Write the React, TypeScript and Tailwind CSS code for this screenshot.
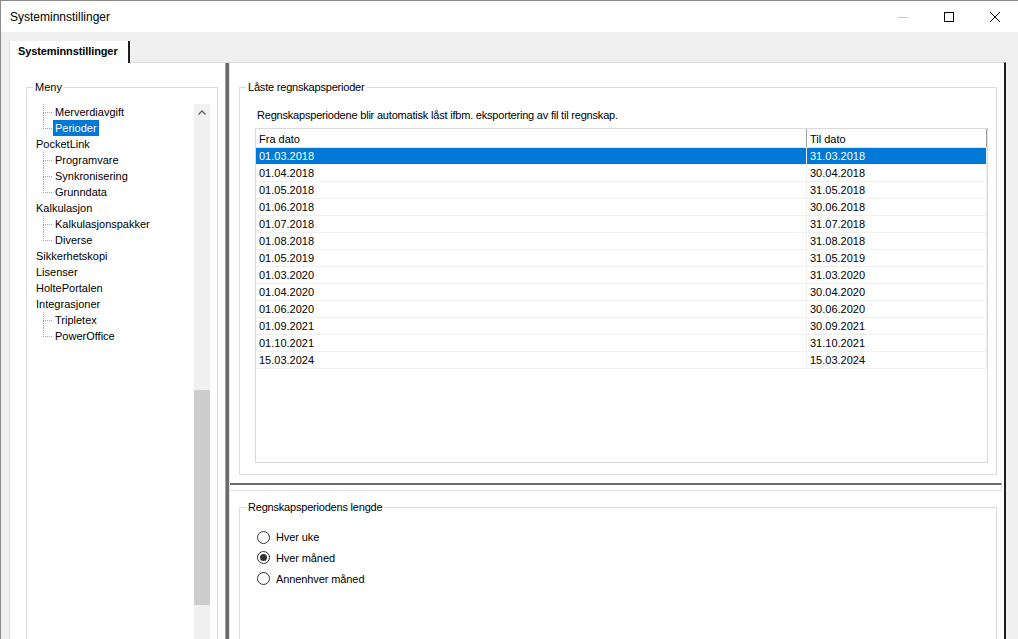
import React from "react";

type TreeItem = { label: string; level: 0 | 1; last?: boolean; selected?: boolean };

const tree: TreeItem[] = [
  { label: "Merverdiavgift", level: 1 },
  { label: "Perioder", level: 1, last: true, selected: true },
  { label: "PocketLink", level: 0 },
  { label: "Programvare", level: 1 },
  { label: "Synkronisering", level: 1 },
  { label: "Grunndata", level: 1, last: true },
  { label: "Kalkulasjon", level: 0 },
  { label: "Kalkulasjonspakker", level: 1 },
  { label: "Diverse", level: 1, last: true },
  { label: "Sikkerhetskopi", level: 0 },
  { label: "Lisenser", level: 0 },
  { label: "HoltePortalen", level: 0 },
  { label: "Integrasjoner", level: 0 },
  { label: "Tripletex", level: 1 },
  { label: "PowerOffice", level: 1, last: true },
];

const rows: [string, string][] = [
  ["01.03.2018", "31.03.2018"],
  ["01.04.2018", "30.04.2018"],
  ["01.05.2018", "31.05.2018"],
  ["01.06.2018", "30.06.2018"],
  ["01.07.2018", "31.07.2018"],
  ["01.08.2018", "31.08.2018"],
  ["01.05.2019", "31.05.2019"],
  ["01.03.2020", "31.03.2020"],
  ["01.04.2020", "30.04.2020"],
  ["01.06.2020", "30.06.2020"],
  ["01.09.2021", "30.09.2021"],
  ["01.10.2021", "31.10.2021"],
  ["15.03.2024", "15.03.2024"],
];

function TreeRow({ item }: { item: TreeItem }) {
  const text = (
    <span
      className={
        "h-[16px] px-[2px] leading-[16px] whitespace-nowrap " +
        (item.selected ? "bg-[#0078d7] text-white" : "")
      }
    >
      {item.label}
    </span>
  );
  if (item.level === 0) {
    return <div className="flex h-[16px] pl-[7px]">{text}</div>;
  }
  return (
    <div className="flex h-[16px] pl-[16px]">
      <div className="flex w-[9px] flex-col">
        <div className="h-[9px] border-b border-l border-dotted border-[#a0a0a0]" />
        <div
          className={
            "flex-1 " + (item.last ? "" : "border-l border-dotted border-[#a0a0a0]")
          }
        />
      </div>
      <div className="ml-[1px] flex">{text}</div>
    </div>
  );
}

function Radio({ label, checked }: { label: string; checked?: boolean }) {
  return (
    <div className="flex items-center pl-[17px]">
      <div className="flex h-[13px] w-[13px] items-center justify-center rounded-full border border-[#333333] bg-white">
        {checked && <div className="h-[7px] w-[7px] rounded-full bg-[#333333]" />}
      </div>
      <span className="ml-[6px] tracking-[-0.1px]">{label}</span>
    </div>
  );
}

export default function App() {
  return (
    <div className="flex h-[639px] w-[1018px] flex-col overflow-hidden border-l border-t border-[#8c8c8c] bg-[#f0f0f0] font-['Liberation_Sans',Arial,sans-serif] text-[11px] leading-[14px] text-black">
      {/* Title bar */}
      <div className="flex h-[31px] shrink-0 items-center bg-white">
        <span className="pl-[9px] text-[12px] leading-[16px]">Systeminnstillinger</span>
        <div className="ml-auto flex h-full">
          <div className="flex h-full w-[46px] items-center justify-center">
            <svg width="10" height="10" viewBox="0 0 10 10">
              <line x1="0" y1="5.5" x2="10" y2="5.5" stroke="#c8c8c8" strokeWidth="1" />
            </svg>
          </div>
          <div className="flex h-full w-[46px] items-center justify-center">
            <svg width="10" height="10" viewBox="0 0 10 10">
              <rect x="0.5" y="0.5" width="9" height="9" fill="none" stroke="#000" strokeWidth="1" />
            </svg>
          </div>
          <div className="flex h-full w-[46px] items-center justify-center">
            <svg width="10" height="10" viewBox="0 0 10 10">
              <path d="M0 0 L10 10 M10 0 L0 10" stroke="#000" strokeWidth="1" />
            </svg>
          </div>
        </div>
      </div>

      {/* Tab strip */}
      <div className="flex h-[30px] shrink-0 items-end pl-[8px]">
        <div className="relative z-10 -mb-px flex h-[22px] w-[121px] items-start border-l border-[#dcdcdc] border-r-2 border-r-[#1e1e1e] bg-white pl-[8px] pt-[3px] font-bold tracking-[-0.1px]">
          Systeminnstillinger
        </div>
      </div>

      {/* Tab page */}
      <div className="ml-[8px] mr-[12px] flex min-h-0 flex-1 border-l border-t border-[#dcdcdc] border-r-2 border-r-[#1e1e1e] bg-white">
        {/* Left panel */}
        <div className="w-[215px] shrink-0 pl-[16px] pr-[7px] pt-[17px]">
          <fieldset className="m-0 h-[600px] border border-[#dcdcdc] p-0">
            <legend className="ml-[6px] px-[2px] leading-[14px]">Meny</legend>
            <div className="mr-[7px] mt-[10px] flex h-[560px]">
              <div className="flex-1">
                {tree.map((t) => (
                  <TreeRow key={t.label} item={t} />
                ))}
              </div>
              <div className="flex w-[16px] flex-col bg-[#f0f0f0]">
                <div className="flex h-[17px] items-center justify-center">
                  <svg width="8" height="5" viewBox="0 0 8 5">
                    <path d="M0.5 4.5 L4 1 L7.5 4.5" fill="none" stroke="#606060" strokeWidth="1.3" />
                  </svg>
                </div>
                <div className="h-[269px]" />
                <div className="h-[215px] bg-[#cdcdcd]" />
              </div>
            </div>
          </fieldset>
        </div>

        {/* Vertical splitter */}
        <div className="w-[4px] shrink-0 border-l border-[#a0a0a0] bg-[#6b6b6b]" />

        {/* Right panel */}
        <div className="flex min-w-0 flex-1 flex-col border-l border-[#e3e3e3]">
          <div className="h-[420px] shrink-0 pl-[9px] pr-[7px] pt-[17px]">
            <fieldset className="m-0 h-[395px] border border-[#dcdcdc] p-0">
              <legend className="ml-[6px] px-[2px] leading-[14px] tracking-[-0.2px]">Låste regnskapsperioder</legend>
              <div className="mt-[14px] pl-[17px] tracking-[-0.2px]">
                Regnskapsperiodene blir automatisk låst ifbm. eksportering av fil til regnskap.
              </div>
              <div className="ml-[15px] mr-[8px] mt-[6px] h-[335px] border border-[#d9d9d9] bg-white">
                <div className="flex h-[19px] border-b border-[#e5e5e5]">
                  <div className="flex w-[551px] items-center border-r border-[#a0a0a0] pl-[3px] pt-[2px]">Fra dato</div>
                  <div className="flex w-[180px] items-center border-r border-[#a0a0a0] pl-[3px] pt-[2px]">Til dato</div>
                </div>
                {rows.map(([a, b], i) => (
                  <div
                    key={i}
                    className={
                      "flex h-[17px] border-b border-[#f0f0f0] " +
                      (i === 0 ? "bg-[#0078d7] text-white" : "")
                    }
                  >
                    <div className="flex w-[551px] items-center border-r border-[#f0f0f0] pl-[3px]">{a}</div>
                    <div className="flex w-[180px] items-center border-r border-[#f0f0f0] pl-[3px]">{b}</div>
                  </div>
                ))}
              </div>
            </fieldset>
          </div>

          {/* Horizontal splitter */}
          <div className="mr-[2px] h-[8px] shrink-0 border-b border-r border-t-2 border-[#e3e3e3] border-t-[#6b6b6b]" />

          <div className="flex-1 pl-[9px] pr-[7px] pt-[9px]">
            <fieldset className="m-0 h-[300px] border border-[#dcdcdc] p-0">
              <legend className="ml-[6px] px-[2px] leading-[14px] tracking-[-0.2px]">Regnskapsperiodens lengde</legend>
              <div className="mt-[13px] flex flex-col">
                <div className="flex h-[20px] items-center">
                  <Radio label="Hver uke" />
                </div>
                <div className="flex h-[21px] items-center">
                  <Radio label="Hver måned" checked />
                </div>
                <div className="flex h-[21px] items-center">
                  <Radio label="Annenhver måned" />
                </div>
              </div>
            </fieldset>
          </div>
        </div>
      </div>
    </div>
  );
}
